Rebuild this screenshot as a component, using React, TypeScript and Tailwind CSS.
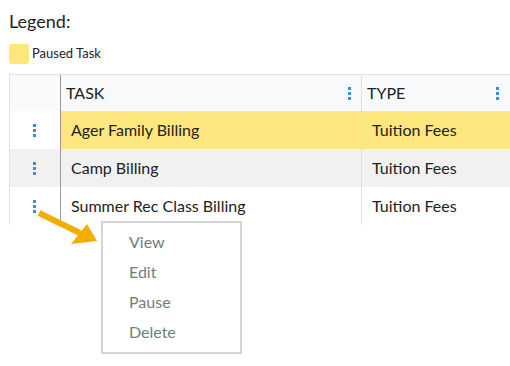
import type { ReactNode } from "react";

const ROWS = [
  { task: "Ager Family Billing", type: "Tuition Fees", paused: true },
  { task: "Camp Billing", type: "Tuition Fees", paused: false },
  { task: "Summer Rec Class Billing", type: "Tuition Fees", paused: false },
];

const MENU = ["View", "Edit", "Pause", "Delete"];

function Dots() {
  return (
    <span className="flex flex-col gap-[2px]">
      <span className="h-[3px] w-[3px] bg-[#3a8fd9]" />
      <span className="h-[3px] w-[3px] bg-[#3a8fd9]" />
      <span className="h-[3px] w-[3px] bg-[#3a8fd9]" />
    </span>
  );
}

function Cell({ className, children }: { className: string; children?: ReactNode }) {
  return <div className={`flex h-[38px] items-center ${className}`}>{children}</div>;
}

export default function App() {
  return (
    <div className="relative h-[366px] w-[510px] overflow-hidden bg-white font-['Lato',sans-serif] text-[#222]">
      <div className="pl-[9px] pt-[8px] text-[18px] leading-[26px]">Legend:</div>
      <div className="mt-[10px] flex items-center gap-[3px] pl-[9px]">
        <span className="h-[20px] w-[20px] rounded-[3px] bg-[#fde77d]" />
        <span className="text-[13px]">Paused Task</span>
      </div>

      <div className="ml-[9px] mt-[10px] w-[501px] border-l border-t border-[#e2e2e2]">
        <div className="grid grid-cols-[51px_301px_1fr] bg-[#f8f9fa]">
          <div className="h-[36px] border-r border-[#9a9a9a]" />
          <div className="flex h-[36px] items-center justify-between border-r border-[#dedede] pl-[5px] pr-[10px] text-[16px]">
            TASK
            <Dots />
          </div>
          <div className="flex h-[36px] items-center justify-between pl-[5px] pr-[11px] text-[16px]">
            TYPE
            <Dots />
          </div>
        </div>
        {ROWS.map((r, i) => (
          <div
            key={r.task}
            className={`grid grid-cols-[51px_301px_1fr] ${i === 1 ? "bg-[#f1f1f1]" : "bg-white"}`}
          >
            <Cell className="justify-center border-r border-[#9a9a9a] pr-[1px]">
              <Dots />
            </Cell>
            <Cell
              className={`border-r border-[#dedede] pl-[10px] text-[16px] ${r.paused ? "bg-[#fee77e]" : ""}`}
            >
              {r.task}
            </Cell>
            <Cell className={`pl-[10px] text-[16px] ${r.paused ? "bg-[#fee77e]" : ""}`}>{r.type}</Cell>
          </div>
        ))}
      </div>

      <div className="absolute left-[101px] top-[221px] flex w-[141px] flex-col border-2 border-[#d4d4d4] bg-white pb-[5px] pt-[4px]">
        {MENU.map((m) => (
          <div key={m} className="h-[30px] pl-[26px] text-[16px] leading-[30px] text-[#6e7e7b]">
            {m}
          </div>
        ))}
      </div>

      <svg className="absolute left-0 top-0" width="510" height="366" viewBox="0 0 510 366">
        <line x1="39" y1="213" x2="80" y2="233" stroke="#f2ae00" strokeWidth="6" />
        <polygon points="97,241 71,244 87,224" fill="#f2ae00" />
      </svg>
    </div>
  );
}
